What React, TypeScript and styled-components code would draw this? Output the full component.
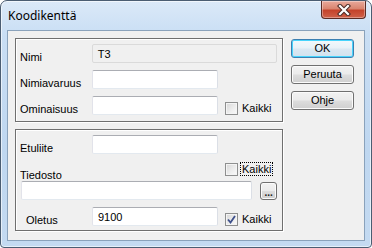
import React from "react";
import styled, { createGlobalStyle, css } from "styled-components";

const GlobalStyle = createGlobalStyle`
  html, body {
    margin: 0;
    padding: 0;
    background: #ffffff;
  }
  body {
    font-family: "Liberation Sans", Arial, sans-serif;
    font-size: 11px;
    color: #000;
  }
`;

const Window = styled.div`
  width: 372px;
  height: 248px;
  box-sizing: border-box;
  border: 1px solid #4b5d72;
  border-radius: 7px 7px 4px 4px;
  background: linear-gradient(180deg, #dbe9f8 0%, #c9def4 14%, #bfd7f0 60%, #c4daf1 100%);
  box-shadow: inset 0 0 0 1px rgba(255, 255, 255, 0.6);
  display: flex;
  flex-direction: column;
  padding: 0 6px 6px;
  overflow: hidden;
`;

const TitleBar = styled.div`
  height: 29px;
  display: flex;
  align-items: flex-start;
  justify-content: space-between;
  flex-shrink: 0;
`;

const Title = styled.div`
  font-family: "Noto Sans", "Open Sans", sans-serif;
  font-size: 12px;
  line-height: 16px;
  padding: 7px 0 0 1px;
  color: #000;
`;

const CloseButton = styled.div`
  width: 45px;
  height: 18px;
  margin-right: -1px;
  box-sizing: border-box;
  border: 1px solid #5a2b24;
  border-top: 0;
  border-radius: 0 0 4px 4px;
  background: linear-gradient(180deg, #e9a99b 0%, #d98570 45%, #c4432b 55%, #cf6149 100%);
  box-shadow: inset 0 0 0 1px rgba(255, 255, 255, 0.35);
  display: flex;
  align-items: center;
  justify-content: center;
`;

const Client = styled.div`
  flex: 1;
  border: 1px solid #8aa2bb;
  background: #f0f0f0;
  display: flex;
  gap: 8px;
  padding: 7px 0 0 7px;
`;

const Groups = styled.div`
  display: flex;
  flex-direction: column;
  gap: 7px;
  width: 268px;
`;

const GroupBox = styled.div<{ $h: number }>`
  box-sizing: border-box;
  height: ${p => p.$h}px;
  border: 1px solid #6f6f6f;
  box-shadow: inset 1px 1px 0 #ffffff, 1px 1px 0 #ffffff;
  padding: 5px 5px 0 4px;
  display: flex;
  flex-direction: column;
`;

const Row = styled.div<{ $mt?: number }>`
  display: flex;
  align-items: flex-end;
  height: 19px;
  margin-top: ${p => p.$mt ?? 0}px;
`;

const Label = styled.div<{ $w?: number; $pl?: number }>`
  width: ${p => p.$w ?? 72}px;
  padding-left: ${p => p.$pl ?? 0}px;
  box-sizing: border-box;
  line-height: 13px;
  margin-bottom: -1px;
  white-space: nowrap;
`;

const Input = styled.div<{ $w: number; $disabled?: boolean }>`
  box-sizing: border-box;
  width: ${p => p.$w}px;
  height: 19px;
  border: 1px solid #abadb3;
  border-left-color: #e2e3ea;
  border-right-color: #dbdfe6;
  border-bottom-color: #e3e9ef;
  border-radius: 2px;
  background: #fff;
  padding: 2px 4px 0 5px;
  line-height: 14px;
  ${p =>
    p.$disabled &&
    css`
      background: #f0f0f0;
      border-color: #dadada;
    `}
`;

const CheckWrap = styled.div<{ $top?: boolean }>`
  display: flex;
  align-items: center;
  margin-left: ${p => (p.$top ? 0 : 7)}px;
  gap: 2px;
  align-self: ${p => (p.$top ? "flex-start" : "auto")};
`;

const Box = styled.div`
  width: 13px;
  height: 13px;
  box-sizing: border-box;
  border: 1px solid #8e8f8f;
  background: linear-gradient(135deg, #d6d6d6 0%, #eeeeee 60%, #fafafa 100%);
  box-shadow: inset 0 0 0 1px #f4f4f4;
  display: flex;
  align-items: center;
  justify-content: center;
`;

const CheckText = styled.span<{ $focus?: boolean }>`
  line-height: 12px;
  padding: 0 1px;
  border: 1px solid transparent;
  ${p =>
    p.$focus &&
    css`
      border: 1px dotted #000;
    `}
`;

const Checkbox = ({ checked, focus, top }: { checked?: boolean; focus?: boolean; top?: boolean }) => (
  <CheckWrap $top={top}>
    <Box>
      {checked && (
        <svg width="9" height="9" viewBox="0 0 9 9">
          <path d="M1 4.5 L3.5 7.5 L8 1" fill="none" stroke="#3d4f8a" strokeWidth="1.8" />
        </svg>
      )}
    </Box>
    <CheckText $focus={focus}>Kaikki</CheckText>
  </CheckWrap>
);

const Buttons = styled.div`
  display: flex;
  flex-direction: column;
  gap: 7px;
  padding-top: 1px;
`;

const Button = styled.div<{ $default?: boolean }>`
  box-sizing: border-box;
  width: 63px;
  height: 19px;
  border: 1px solid #707070;
  border-radius: 3px;
  background: linear-gradient(180deg, #f2f2f2 0%, #ebebeb 48%, #dddddd 52%, #cfcfcf 100%);
  box-shadow: inset 0 0 0 1px #fbfbfb;
  display: flex;
  align-items: center;
  justify-content: center;
  line-height: 13px;
  ${p =>
    p.$default &&
    css`
      border-color: #3c7fb1;
      box-shadow: inset 0 0 0 1px #48d4fc;
      background: linear-gradient(180deg, #f3f9fc 0%, #e8f1f7 48%, #dbe8f2 52%, #d2e2ee 100%);
    `}
`;

const SmallButton = styled.div`
  box-sizing: border-box;
  width: 17px;
  height: 18px;
  margin: 1px 0 0 8px;
  border: 1px solid #707070;
  border-radius: 3px;
  background: linear-gradient(180deg, #f2f2f2 0%, #ebebeb 48%, #dddddd 52%, #cfcfcf 100%);
  box-shadow: inset 0 0 0 1px #fbfbfb;
  display: flex;
  align-items: flex-end;
  justify-content: center;
  font-weight: bold;
  font-size: 10px;
  line-height: 12px;
  color: #222;
`;

const FileRow = styled.div`
  display: flex;
  align-items: flex-start;
  height: 19px;
  margin-left: 1px;
`;

export default function App() {
  return (
    <>
      <GlobalStyle />
      <Window>
        <TitleBar>
          <Title>Koodikenttä</Title>
          <CloseButton>
            <svg width="14" height="12" viewBox="0 0 14 12">
              <path d="M3 2 L11 10 M11 2 L3 10" stroke="#4a2a26" strokeWidth="4.2" strokeLinecap="square" />
              <path d="M3 2 L11 10 M11 2 L3 10" stroke="#ffffff" strokeWidth="2.2" strokeLinecap="square" />
            </svg>
          </CloseButton>
        </TitleBar>
        <Client>
          <Groups>
            <GroupBox $h={84}>
              <Row>
                <Label>Nimi</Label>
                <Input $w={186} $disabled>T3</Input>
              </Row>
              <Row $mt={7}>
                <Label>Nimiavaruus</Label>
                <Input $w={126} />
              </Row>
              <Row $mt={7}>
                <Label>Ominaisuus</Label>
                <Input $w={126} />
                <Checkbox />
              </Row>
            </GroupBox>
            <GroupBox $h={102}>
              <Row>
                <Label>Etuliite</Label>
                <Input $w={126} />
              </Row>
              <Row $mt={8}>
                <Label $w={205}>Tiedosto</Label>
                <Checkbox focus top />
              </Row>
              <FileRow>
                <Input $w={233} />
                <SmallButton>...</SmallButton>
              </FileRow>
              <Row $mt={7}>
                <Label $pl={6}>Oletus</Label>
                <Input $w={126}>9100</Input>
                <Checkbox checked />
              </Row>
            </GroupBox>
          </Groups>
          <Buttons>
            <Button $default>OK</Button>
            <Button>Peruuta</Button>
            <Button>Ohje</Button>
          </Buttons>
        </Client>
      </Window>
    </>
  );
}
